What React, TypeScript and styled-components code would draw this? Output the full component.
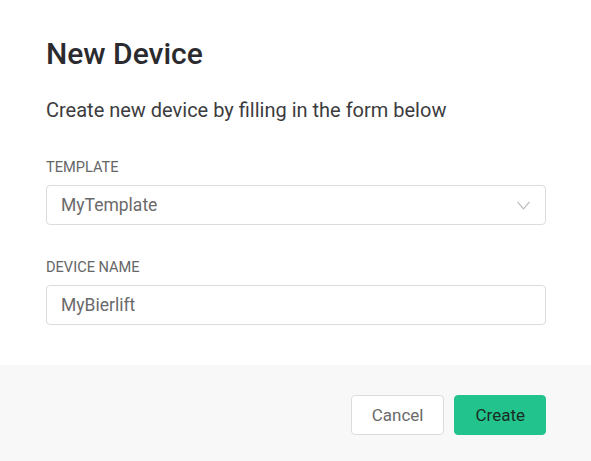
import styled, { createGlobalStyle } from "styled-components"

const GlobalStyle = createGlobalStyle`
    html, body {
        margin: 0;
        padding: 0;
        background: #ffffff;
        font-family: Roboto, "Liberation Sans", Arial, sans-serif;
    }
`

const Chevron = () => (
    <svg width="13" height="9" viewBox="0 0 13 9" fill="none">
        <path d="M0.5 0.8 L6.5 7.8 L12.5 0.8" stroke="#b8b8b8" strokeWidth="1.1" />
    </svg>
)

const App = () => {
    return (
        <>
            <GlobalStyle />
            <Modal>
                <Body>
                    <Title>New Device</Title>
                    <Subtitle>Create new device by filling in the form below</Subtitle>
                    <Field>
                        <Label>Template</Label>
                        <SelectBox>
                            <span>MyTemplate</span>
                            <Chevron />
                        </SelectBox>
                    </Field>
                    <Field>
                        <Label htmlFor="device-name">Device Name</Label>
                        <Input id="device-name" defaultValue="MyBierlift" />
                    </Field>
                </Body>
                <Footer>
                    <Button>Cancel</Button>
                    <Button $primary>Create</Button>
                </Footer>
            </Modal>
        </>
    )
}

export default App

const Modal = styled.div`
    width: 591px;
    height: 461px;
    display: flex;
    flex-direction: column;
    background: #ffffff;
`

const Body = styled.div`
    flex: 1;
    display: flex;
    flex-direction: column;
    padding: 37px 45px 0 46px;
`

const Title = styled.h1`
    margin: 0;
    font-size: 30px;
    line-height: 34px;
    font-weight: 500;
    color: #2b2b2f;
`

const Subtitle = styled.p`
    margin: 27px 0 0;
    font-size: 20px;
    line-height: 24px;
    color: #3c3c40;
`

const Field = styled.div`
    display: flex;
    flex-direction: column;
    margin-top: 37px;

    & + & {
        margin-top: 34px;
    }
`

const Label = styled.label`
    font-size: 14.6px;
    line-height: 16px;
    text-transform: uppercase;
    color: #666666;
    margin-bottom: 10px;
`

const SelectBox = styled.div`
    box-sizing: border-box;
    height: 40px;
    display: flex;
    align-items: center;
    justify-content: space-between;
    padding: 0 15px 0 14px;
    border: 1px solid #dcdcdc;
    border-radius: 4px;
    font-size: 17.5px;
    color: #6a6a6a;
`

const Input = styled.input`
    box-sizing: border-box;
    height: 40px;
    padding: 0 14px;
    border: 1px solid #dcdcdc;
    border-radius: 4px;
    font-family: inherit;
    font-size: 17.5px;
    color: #6a6a6a;
    outline: none;
`

const Footer = styled.div`
    height: 96px;
    box-sizing: border-box;
    display: flex;
    justify-content: flex-end;
    align-items: flex-start;
    gap: 10px;
    padding: 30px 45px 0;
    background: #f8f8f8;
`

const Button = styled.button<{ $primary?: boolean }>`
    box-sizing: border-box;
    height: 40px;
    padding: 0 20px;
    border-radius: 4px;
    font-family: inherit;
    font-size: 17px;
    border: 1px solid ${(p) => (p.$primary ? "#22c38c" : "#dcdcdc")};
    background: ${(p) => (p.$primary ? "#22c38c" : "#ffffff")};
    color: ${(p) => (p.$primary ? "#1a2c24" : "#6a6a6a")};
    cursor: pointer;
`
